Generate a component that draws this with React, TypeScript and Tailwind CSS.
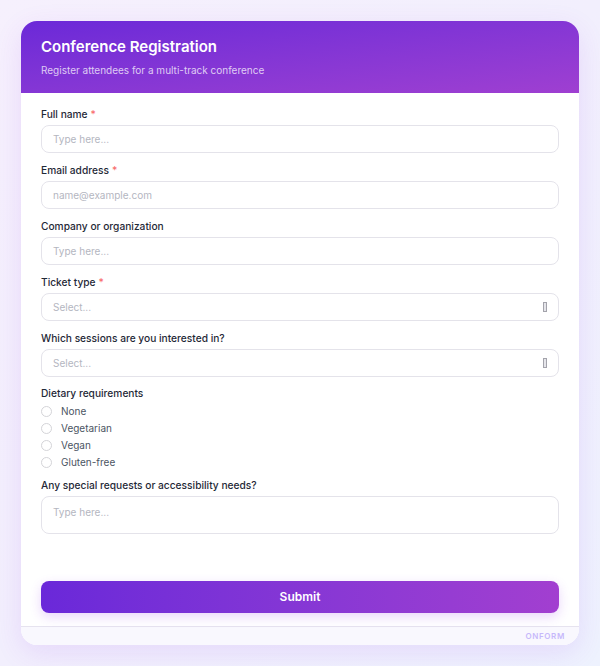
import React from "react";

const font = { fontFamily: "Inter, 'Noto Sans', sans-serif" };

const Label: React.FC<{ text: string; required?: boolean }> = ({ text, required }) => (
  <div className="h-[14px] text-[10.2px] font-medium leading-[14px] text-[#1f2937]">
    {text}
    {required && <span className="ml-[3px] text-[#f87171]">*</span>}
  </div>
);

const TextInput: React.FC<{ placeholder: string }> = ({ placeholder }) => (
  <div className="flex h-[28px] items-center rounded-lg border-[1.5px] border-[#e4e3ea] bg-white px-[11px] text-[10px] text-[#b4b6bf]">
    {placeholder}
  </div>
);

const SelectInput: React.FC = () => (
  <div className="flex h-[28px] items-center justify-between rounded-lg border-[1.5px] border-[#e4e3ea] bg-white pl-[11px] pr-[11px] text-[10px] text-[#b4b6bf]">
    <span>Select...</span>
    <span className="h-[10px] w-[4px] border border-[#a3a3ab] bg-[#e5e5ea]" />
  </div>
);

const Field: React.FC<{ label: string; required?: boolean; children: React.ReactNode }> = ({
  label,
  required,
  children,
}) => (
  <div className="flex flex-col gap-[4px]">
    <Label text={label} required={required} />
    {children}
  </div>
);

const dietary = ["None", "Vegetarian", "Vegan", "Gluten-free"];

export default function App() {
  return (
    <div
      style={font}
      className="min-h-[666px] bg-gradient-to-br from-[#f6f0fd] via-[#f2effd] to-[#eef2fe] px-[21px] pb-[21px] pt-[21px]"
    >
      <div className="overflow-hidden rounded-2xl bg-white shadow-[0_8px_28px_rgba(147,51,234,0.12)]">
        {/* Header */}
        <div className="h-[72px] bg-gradient-to-br from-[#6b28d8] to-[#9f3fd1] px-5 pt-[16px]">
          <h1 className="text-[15px] font-semibold leading-[20px] text-white">Conference Registration</h1>
          <p className="mt-[6px] text-[10px] leading-[14px] text-white/75">
            Register attendees for a multi-track conference
          </p>
        </div>

        {/* Body */}
        <div className="flex flex-col gap-[10px] px-5 pt-[14px]">
          <Field label="Full name" required>
            <TextInput placeholder="Type here..." />
          </Field>
          <Field label="Email address" required>
            <TextInput placeholder="name@example.com" />
          </Field>
          <Field label="Company or organization">
            <TextInput placeholder="Type here..." />
          </Field>
          <Field label="Ticket type" required>
            <SelectInput />
          </Field>
          <Field label="Which sessions are you interested in?">
            <SelectInput />
          </Field>

          <div className="-mt-px flex flex-col">
            <Label text="Dietary requirements" />
            <div className="mt-[3px] flex flex-col">
              {dietary.map((d) => (
                <div key={d} className="flex h-[17px] items-center gap-[9px]">
                  <span className="h-[11px] w-[11px] rounded-full border border-[#d4d4d8] bg-white" />
                  <span className="text-[10px] text-[#4b5563]">{d}</span>
                </div>
              ))}
            </div>
          </div>

          <div className="-mt-[3px] flex flex-col gap-[4px]">
            <Label text="Any special requests or accessibility needs?" />
            <div className="h-[38px] rounded-lg border-[1.5px] border-[#e4e3ea] bg-white px-[11px] pt-[8px] text-[10px] leading-[14px] text-[#b4b6bf]">
              Type here...
            </div>
          </div>

          <button className="mb-[13px] mt-[37px] h-[32px] rounded-lg bg-gradient-to-r from-[#6a28d9] to-[#a23fd0] text-[12px] font-semibold text-white shadow-[0_4px_12px_rgba(147,51,234,0.2)]">
            Submit
          </button>
        </div>

        {/* Footer */}
        <div className="flex h-[19px] items-center justify-end border-t border-[#e6e3ef] bg-[#f9f8fe] pr-[14px]">
          <span className="text-[8px] font-semibold tracking-[0.08em] text-[#c7b8fb]">ONFORM</span>
        </div>
      </div>
    </div>
  );
}
